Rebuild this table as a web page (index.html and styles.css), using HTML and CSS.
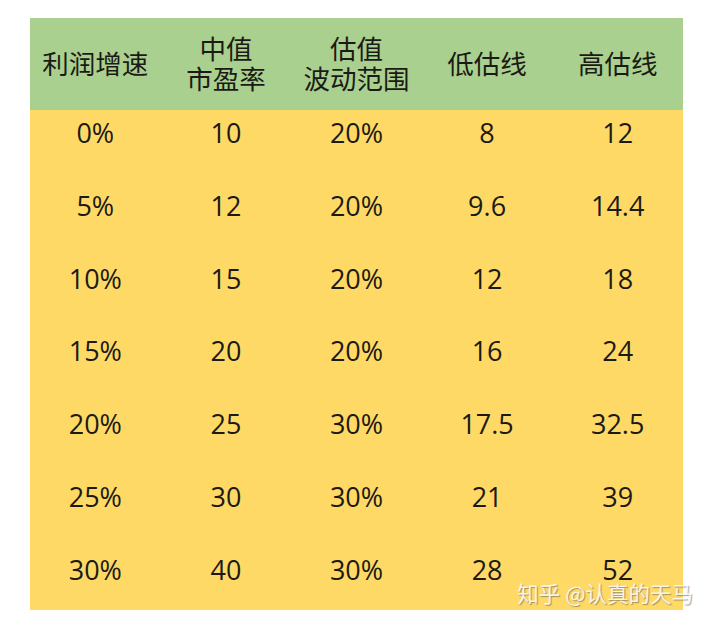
FILE: index.html
```html
<!DOCTYPE html>
<html lang="zh">
<head>
  <meta charset="UTF-8">
  <meta name="viewport" content="width=device-width, initial-scale=1.0">
  <title>估值表</title>
  <link rel="stylesheet" href="styles.css">
</head>
<body>
  <div class="sheet">
    <div class="head">
      <div class="cell">利润增速</div>
      <div class="cell">中值<br>市盈率</div>
      <div class="cell">估值<br>波动范围</div>
      <div class="cell">低估线</div>
      <div class="cell">高估线</div>
    </div>
    <div class="rows">
      <div class="row"><span>0%</span><span>10</span><span>20%</span><span>8</span><span>12</span></div>
      <div class="row"><span>5%</span><span>12</span><span>20%</span><span>9.6</span><span>14.4</span></div>
      <div class="row"><span>10%</span><span>15</span><span>20%</span><span>12</span><span>18</span></div>
      <div class="row"><span>15%</span><span>20</span><span>20%</span><span>16</span><span>24</span></div>
      <div class="row"><span>20%</span><span>25</span><span>30%</span><span>17.5</span><span>32.5</span></div>
      <div class="row"><span>25%</span><span>30</span><span>30%</span><span>21</span><span>39</span></div>
      <div class="row"><span>30%</span><span>40</span><span>30%</span><span>28</span><span>52</span></div>
    </div>
    <div class="watermark">知乎 @认真的天马</div>
  </div>
</body>
</html>
```

FILE: styles.css
```css
:root {
  --green: #a9d08e;
  --yellow: #ffd966;
  --ink: #1c1a14;
}

* {
  box-sizing: border-box;
  margin: 0;
  padding: 0;
}

body {
  background: #fff;
  padding: 18px 30px;
  font-family: 'Open Sans', 'Noto Sans CJK SC', sans-serif;
  color: var(--ink);
}

.sheet {
  position: relative;
  width: 653px;
  background: var(--yellow);
}

.head {
  display: grid;
  grid-template-columns: repeat(5, 1fr);
  height: 92px;
  background: var(--green);
}

.head .cell {
  display: flex;
  align-items: center;
  justify-content: center;
  text-align: center;
  font-family: 'Noto Sans CJK SC', sans-serif;
  font-size: 26.5px;
  line-height: 30px;
  padding-bottom: 2px;
}

.rows {
  display: grid;
  grid-template-rows: repeat(6, 72.8px) 63px;
}

.row {
  display: grid;
  grid-template-columns: repeat(5, 1fr);
  padding-top: 7px;
}

.row span {
  text-align: center;
  font-size: 27px;
  line-height: 32px;
}

.watermark {
  position: absolute;
  right: -10px;
  bottom: 4px;
  font-family: 'Noto Sans CJK SC', sans-serif;
  font-size: 21.5px;
  line-height: 26px;
  color: rgba(255, 255, 255, 0.85);
  text-shadow: 1px 1px 1px rgba(90, 90, 90, 0.55);
  white-space: nowrap;
}
```
